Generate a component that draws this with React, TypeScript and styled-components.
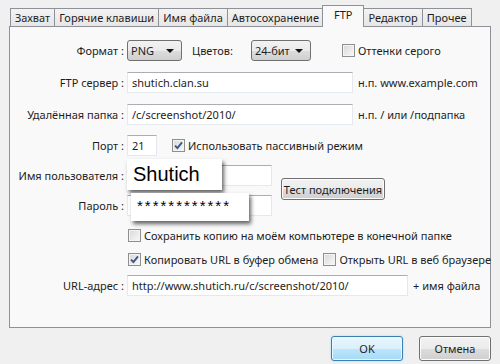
import styled, { createGlobalStyle, css } from 'styled-components';

const GlobalStyle = createGlobalStyle`
  body {
    margin: 0;
    background: #f0f0f0;
    font-family: "Noto Sans", "Open Sans", sans-serif;
    font-size: 11px;
    color: #1e1e1e;
  }
`;

const Window = styled.div`
  width: 500px;
  height: 364px;
  background: #f0f0f0;
  overflow: hidden;
  box-sizing: border-box;
  padding-top: 5px;
`;

const TabBar = styled.div`
  display: flex;
  align-items: flex-end;
  height: 21px;
  padding-left: 10px;
  position: relative;
  z-index: 2;
`;

const Tab = styled.div<{ $active?: boolean }>`
  height: 18px;
  box-sizing: border-box;
  padding: 0 4px;
  display: flex;
  align-items: center;
  border: 1px solid #8e9198;
  border-bottom: none;
  margin-right: -1px;
  background: linear-gradient(#f3f3f3, #e6e6e6);
  white-space: nowrap;
  ${(p) =>
    p.$active &&
    css`
      height: 22px;
      margin: 0 -1px -1px -1px;
      padding: 0 11px 4px;
      background: #f9f9f9;
      position: relative;
      z-index: 3;
    `}
`;

const Panel = styled.div`
  margin-left: 9px;
  width: 482px;
  height: 302px;
  box-sizing: border-box;
  border: 1px solid #8e9198;
  background: #f9f9f9;
  padding-top: 13px;
  position: relative;
  z-index: 1;
`;

const Row = styled.div<{ $top?: number }>`
  display: flex;
  align-items: center;
  margin-top: ${(p) => p.$top ?? 0}px;
  & > * {
    flex-shrink: 0;
  }
`;

const Label = styled.div`
  width: 114px;
  text-align: right;
  margin-right: 3px;
  white-space: nowrap;
`;

const InlineLabel = styled.div<{ $width: number; $left: number }>`
  width: ${(p) => p.$width}px;
  margin-left: ${(p) => p.$left}px;
  white-space: nowrap;
`;

const Select = styled.div<{ $width: number }>`
  width: ${(p) => p.$width}px;
  height: 21px;
  box-sizing: border-box;
  border: 1px solid #707070;
  border-radius: 3px;
  background: linear-gradient(#f2f2f2 0%, #ebebeb 50%, #dddddd 51%, #cfcfcf 100%);
  display: flex;
  align-items: center;
  justify-content: space-between;
  padding: 0 7px 0 3px;
`;

const Arrow = styled.span`
  width: 0;
  height: 0;
  border-left: 4px solid transparent;
  border-right: 4px solid transparent;
  border-top: 4px solid #111;
`;

const Field = styled.div<{ $width: number }>`
  width: ${(p) => p.$width}px;
  height: 21px;
  box-sizing: border-box;
  border: 1px solid #e3e9ef;
  border-top-color: #abadb3;
  background: #fff;
  display: flex;
  align-items: center;
  padding-left: 4px;
  position: relative;
  white-space: nowrap;
`;

const Hint = styled.div`
  margin-left: 5px;
  white-space: nowrap;
`;

const Check = styled.label<{ $left?: number }>`
  display: flex;
  align-items: center;
  gap: 3px;
  margin-left: ${(p) => p.$left ?? 0}px;
  white-space: nowrap;
`;

const Box = styled.span`
  width: 13px;
  height: 13px;
  box-sizing: border-box;
  border: 1px solid #8f8f8f;
  background: linear-gradient(135deg, #d8d8d8, #f9f9f9);
  box-shadow: inset 0 0 0 1px #f4f4f4;
  display: flex;
  align-items: center;
  justify-content: center;
`;

const CheckBox = ({ checked }: { checked?: boolean }) => (
  <Box>
    {checked && (
      <svg width="9" height="9" viewBox="0 0 9 9">
        <path d="M1 4.6 L3.4 7 L8 1.4" fill="none" stroke="#3a5590" strokeWidth="1.9" />
      </svg>
    )}
  </Box>
);

const CredBlock = styled.div`
  display: flex;
  align-items: center;
  margin-top: 9px;
`;

const CredRows = styled.div`
  display: flex;
  flex-direction: column;
  gap: 9px;
`;

const Button = styled.div<{ $primary?: boolean }>`
  width: 72px;
  height: 25px;
  box-sizing: border-box;
  border: 1px solid #707070;
  border-radius: 3px;
  background: linear-gradient(#f2f2f2 0%, #ebebeb 50%, #dddddd 51%, #cfcfcf 100%);
  box-shadow: inset 0 0 0 1px #fcfcfc;
  display: flex;
  align-items: center;
  justify-content: center;
  white-space: nowrap;
  flex-shrink: 0;
  ${(p) =>
    p.$primary &&
    css`
      border-color: #3c7fb1;
      background: linear-gradient(#eaf6fd 0%, #d9f0fc 50%, #bee6fd 51%, #a7d9f5 100%);
      box-shadow: inset 0 0 0 1px #e8f6fd, 0 0 2px #9ad3f5;
    `}
`;

const TestButton = styled(Button)`
  width: 104px;
  height: 22px;
  margin-left: 9px;
  margin-top: -3px;
`;

const Footer = styled.div`
  display: flex;
  justify-content: flex-end;
  gap: 16px;
  padding: 8px 9px 0 0;
`;

const Callout = styled.div<{ $left: number; $top: number; $width: number; $height: number; $size: number; $spacing?: number }>`
  position: absolute;
  left: ${(p) => p.$left}px;
  top: ${(p) => p.$top}px;
  width: ${(p) => p.$width}px;
  height: ${(p) => p.$height}px;
  box-sizing: border-box;
  background: #fff;
  box-shadow: 2px 3px 4px rgba(0, 0, 0, 0.6);
  font-family: "Liberation Sans", Arial, sans-serif;
  font-size: ${(p) => p.$size}px;
  letter-spacing: ${(p) => p.$spacing ?? 0}px;
  color: #000;
  padding: 4px 0 0 6px;
  z-index: 5;
`;

const tabs = ['Захват', 'Горячие клавиши', 'Имя файла', 'Автосохранение', 'FTP', 'Редактор', 'Прочее'];

export default function App() {
  return (
    <Window>
      <GlobalStyle />
      <TabBar>
        {tabs.map((t) => (
          <Tab key={t} $active={t === 'FTP'}>
            {t}
          </Tab>
        ))}
      </TabBar>
      <Panel>
        <Row>
          <Label>Формат :</Label>
          <Select $width={55}>
            PNG <Arrow />
          </Select>
          <InlineLabel $width={59} $left={10}>Цветов:</InlineLabel>
          <Select $width={60}>
            24-бит <Arrow />
          </Select>
          <Check $left={31}>
            <CheckBox /> Оттенки серого
          </Check>
        </Row>
        <Row $top={11}>
          <Label>FTP сервер :</Label>
          <Field $width={226}>shutich.clan.su</Field>
          <Hint>н.п. www.example.com</Hint>
        </Row>
        <Row $top={11}>
          <Label>Удалённая папка :</Label>
          <Field $width={226}>/c/screenshot/2010/</Field>
          <Hint>н.п. / или /подпапка</Hint>
        </Row>
        <Row $top={10}>
          <Label>Порт :</Label>
          <Field $width={30}>21</Field>
          <Check $left={15}>
            <CheckBox checked /> Использовать пассивный режим
          </Check>
        </Row>
        <CredBlock>
          <CredRows>
            <Row>
              <Label>Имя пользователя :</Label>
              <Field $width={145}>
                <Callout $left={-1} $top={-7} $width={95} $height={31} $size={20}>
                  Shutich
                </Callout>
              </Field>
            </Row>
            <Row>
              <Label>Пароль :</Label>
              <Field $width={145}>
                <Callout $left={3} $top={-3} $width={118} $height={28} $size={15} $spacing={2}>
                  ************
                </Callout>
              </Field>
            </Row>
          </CredRows>
          <TestButton>Тест подключения</TestButton>
        </CredBlock>
        <Row $top={12}>
          <Check $left={118}>
            <CheckBox /> Сохранить копию на моём компьютере в конечной папке
          </Check>
        </Row>
        <Row $top={9}>
          <Check $left={118}>
            <CheckBox checked /> Копировать URL в буфер обмена
          </Check>
          <Check $left={5}>
            <CheckBox /> Открыть URL в веб браузере
          </Check>
        </Row>
        <Row $top={8}>
          <Label>URL-адрес :</Label>
          <Field $width={281}>http://www.shutich.ru/c/screenshot/2010/</Field>
          <Hint>+ имя файла</Hint>
        </Row>
      </Panel>
      <Footer>
        <Button $primary>OK</Button>
        <Button>Отмена</Button>
      </Footer>
    </Window>
  );
}
